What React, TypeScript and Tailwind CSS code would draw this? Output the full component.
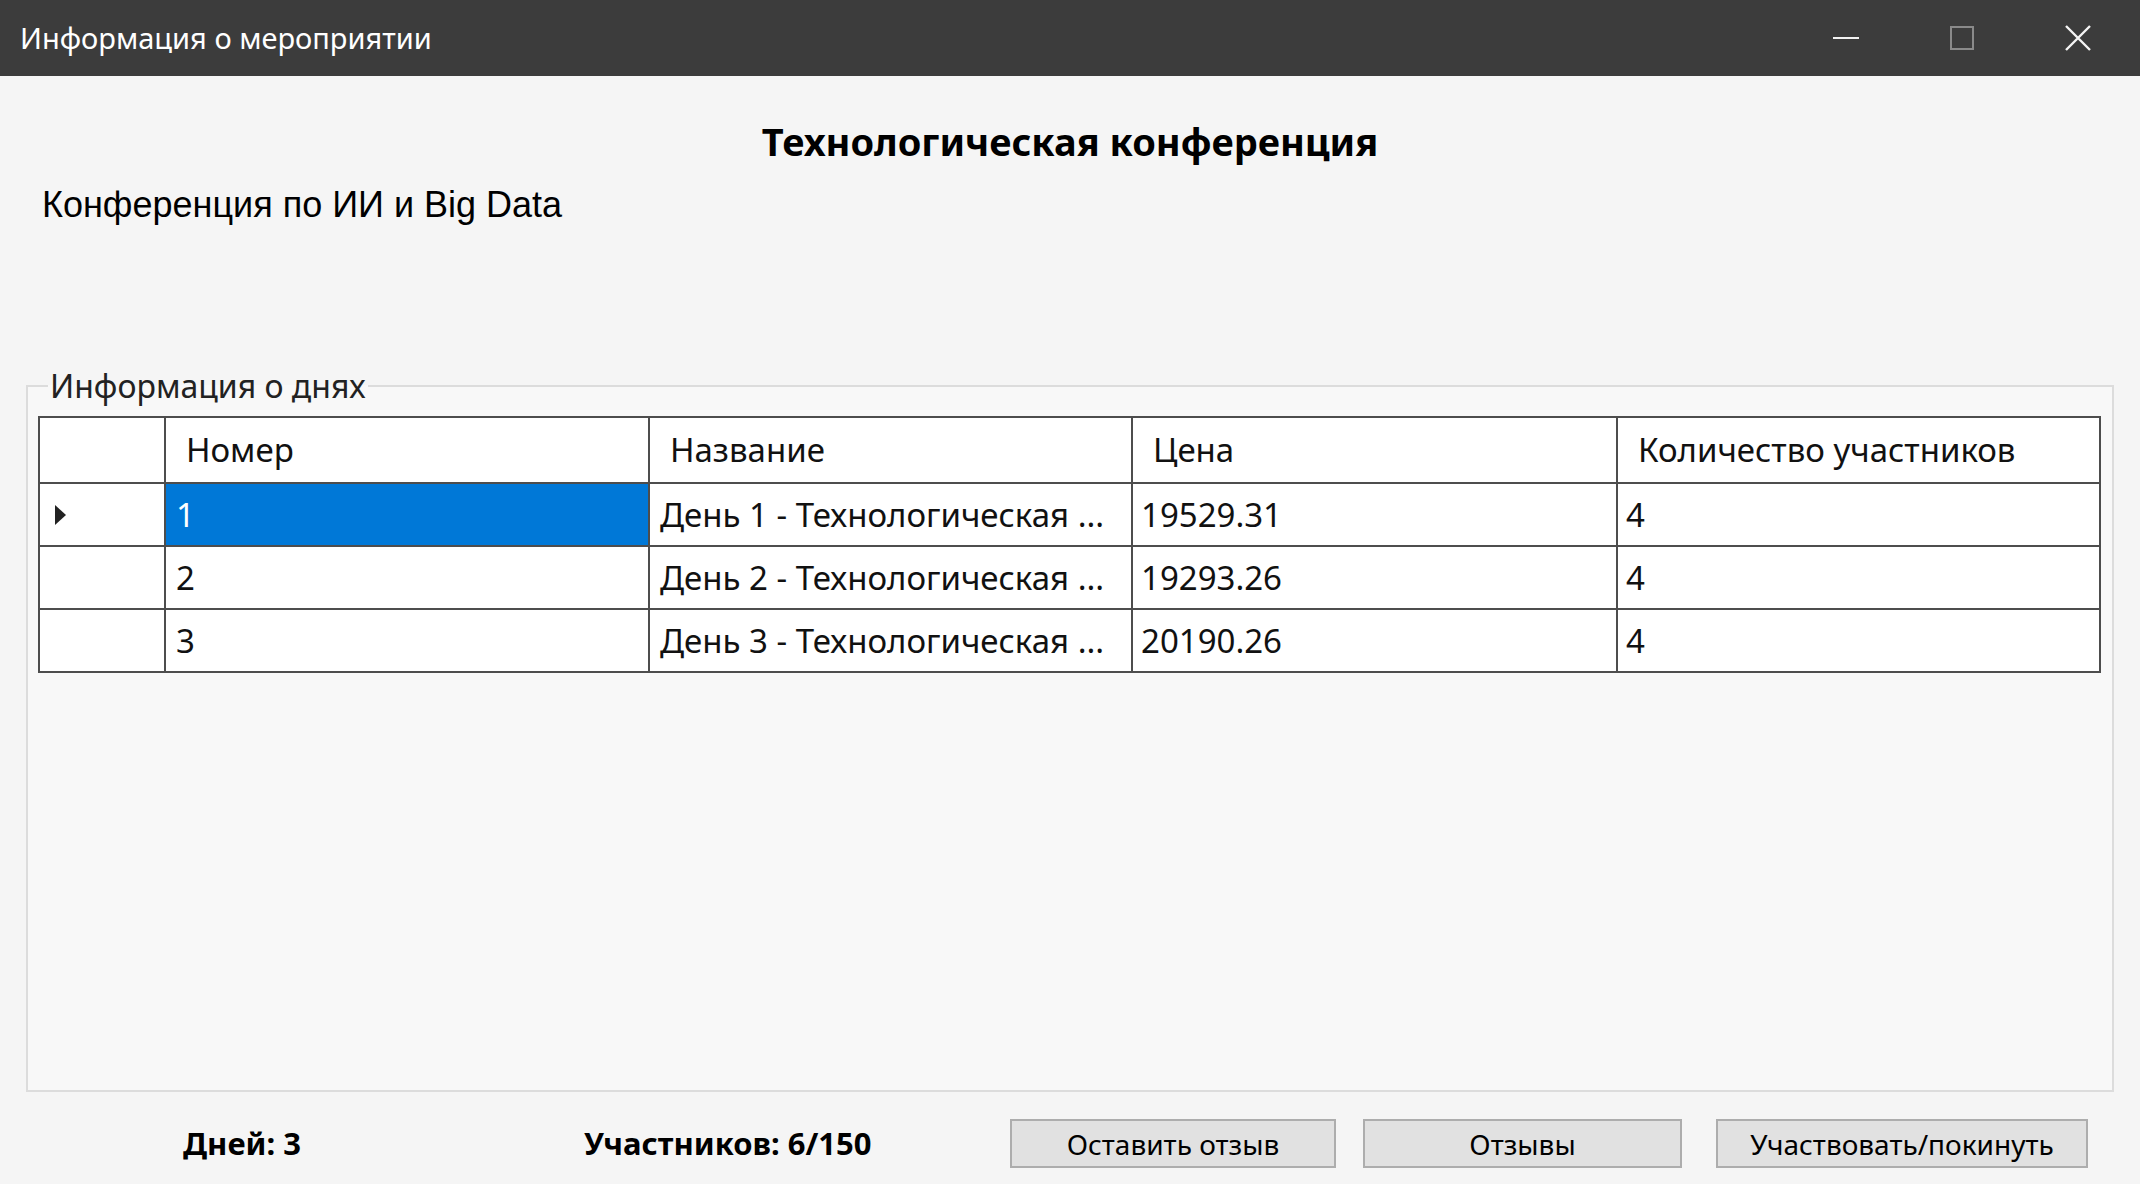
import { useState } from "react";

interface DayRow {
  num: number;
  name: string;
  price: string;
  count: number;
}

const days: DayRow[] = [
  { num: 1, name: "День 1 - Технологическая ...", price: "19529.31", count: 4 },
  { num: 2, name: "День 2 - Технологическая ...", price: "19293.26", count: 4 },
  { num: 3, name: "День 3 - Технологическая ...", price: "20190.26", count: 4 },
];

const ui = { fontFamily: '"Noto Sans", "Open Sans", sans-serif' };

function TitleBar() {
  return (
    <div className="h-[76px] bg-[#3c3c3c] flex items-center text-white shrink-0">
      <div className="pl-[20px] text-[29px] flex-1" style={ui}>
        Информация о мероприятии
      </div>
      {/* window controls */}
      <div className="flex items-center h-full pr-[4px]">
        <button className="w-[116px] h-full flex items-center justify-center">
          <svg width="26" height="4" viewBox="0 0 26 4">
            <rect x="0" y="1" width="26" height="2" fill="#f2f2f2" />
          </svg>
        </button>
        <button className="w-[116px] h-full flex items-center justify-center">
          <svg width="24" height="24" viewBox="0 0 24 24">
            <rect x="1" y="1" width="22" height="22" fill="none" stroke="#8a8a8a" strokeWidth="2" />
          </svg>
        </button>
        <button className="w-[116px] h-full flex items-center justify-center">
          <svg width="26" height="26" viewBox="0 0 26 26">
            <path d="M1 1 L25 25 M25 1 L1 25" stroke="#f5f5f5" strokeWidth="2.4" />
          </svg>
        </button>
      </div>
    </div>
  );
}

function DaysGrid() {
  const [selected] = useState(0);
  const cols = ["Номер", "Название", "Цена", "Количество участников"];
  const cell = "border-2 border-[#4d4d4d]";
  return (
    <table className="table-fixed border-collapse bg-white w-[2061px] text-[33px] text-[#111]" style={ui}>
      <colgroup>
        <col className="w-[126px]" />
        <col className="w-[484px]" />
        <col className="w-[483px]" />
        <col className="w-[485px]" />
        <col className="w-[483px]" />
      </colgroup>
      <thead>
        <tr className="h-[66px]">
          <th className={cell} />
          {cols.map((c) => (
            <th key={c} className={`${cell} text-left font-normal pl-[20px]`}>
              {c}
            </th>
          ))}
        </tr>
      </thead>
      <tbody>
        {days.map((d, i) => {
          const sel = i === selected;
          return (
            <tr key={d.num} className="h-[63px]">
              <td className={`${cell} pl-[14px]`}>
                {sel && (
                  <svg width="14" height="22" viewBox="0 0 14 22" className="block">
                    <path d="M1 1 L12 11 L1 21 Z" fill="#222" />
                  </svg>
                )}
              </td>
              <td className={sel ? `${cell} pl-[10px] bg-[#0078d7] text-white` : `${cell} pl-[10px]`}>
                {d.num}
              </td>
              <td className={`${cell} pl-[10px] whitespace-nowrap overflow-hidden`}>{d.name}</td>
              <td className={`${cell} pl-[8px]`}>{d.price}</td>
              <td className={`${cell} pl-[8px]`}>{d.count}</td>
            </tr>
          );
        })}
      </tbody>
    </table>
  );
}

function WinButton({ label, w }: { label: string; w: string }) {
  return (
    <button
      className={`${w} h-[49px] bg-[#e1e1e1] border-2 border-[#adadad] text-[28px] text-black flex items-center justify-center`}
      style={ui}
    >
      {label}
    </button>
  );
}

export default function App() {
  return (
    <div className="w-[2140px] h-[1184px] bg-[#f5f5f5] flex flex-col overflow-hidden">
      <TitleBar />
      <div className="flex-1 flex flex-col px-[26px]">
        <h1 className="text-center font-bold text-[38px] text-black mt-[40px] leading-[50px]" style={ui}>
          Технологическая конференция
        </h1>
        <p
          className="text-[36px] text-black ml-[16px] mt-[17px] leading-[44px]"
          style={{ fontFamily: '"Liberation Sans", Arial, sans-serif' }}
        >
          Конференция по ИИ и Big Data
        </p>
        <fieldset className="border-2 border-[#dcdcdc] mt-[139px] h-[726px] px-[10px] pt-[10px] bg-[#f8f8f8]">
          <legend className="text-[32px] text-[#222] px-[2px] ml-[10px] leading-[40px]" style={ui}>
            Информация о днях
          </legend>
          <DaysGrid />
        </fieldset>
        <div className="flex items-center mt-[27px]">
          <div className="w-[157px]" />
          <div className="font-bold text-[31px] text-black w-[401px]" style={ui}>
            Дней: 3
          </div>
          <div className="font-bold text-[31px] text-black w-[426px]" style={ui}>
            Участников: 6/150
          </div>
          <div className="flex">
            <WinButton label="Оставить отзыв" w="w-[326px]" />
            <div className="w-[27px]" />
            <WinButton label="Отзывы" w="w-[319px]" />
            <div className="w-[34px]" />
            <WinButton label="Участвовать/покинуть" w="w-[372px]" />
          </div>
        </div>
      </div>
    </div>
  );
}
